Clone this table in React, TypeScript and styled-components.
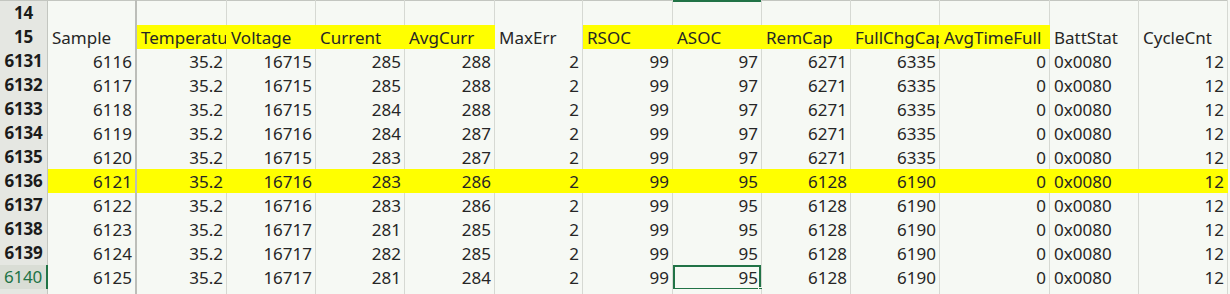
import styled, { createGlobalStyle, css } from 'styled-components'

const GREEN = '#217346'
const GRID = '#d6d9d3'
const CELL_BG = '#f6f9f4'
const HEAD_BG = '#e5e7e2'
const YELLOW = '#ffff00'

const COLS = '48px 89px 90px 89px 89px 90px 88px 90px 89px 89px 89px 110px 89px 89px'

const GlobalStyle = createGlobalStyle`
  html, body {
    margin: 0;
    padding: 0;
    background: ${CELL_BG};
    overflow: hidden;
  }
  body {
    font-family: 'Noto Sans', 'Liberation Sans', sans-serif;
  }
`

const Sheet = styled.div`
  width: 1230px;
  height: 294px;
  overflow: hidden;
  background: ${CELL_BG};
`

const Row = styled.div<{ $tall?: boolean }>`
  display: grid;
  grid-template-columns: ${COLS};
  height: ${(p) => (p.$tall ? 25 : 24)}px;
`

const RowHead = styled.div<{ $active?: boolean; $top?: boolean }>`
  box-sizing: border-box;
  background: ${(p) => (p.$active ? '#d9ddd5' : HEAD_BG)};
  border-right: 1px solid #c3c6c0;
  border-bottom: 1px solid #cfd2cc;
  color: #1b1b1b;
  font-size: 17px;
  font-weight: 700;
  line-height: 24px;
  text-align: center;
  letter-spacing: -0.2px;
  ${(p) =>
    p.$top &&
    css`
      box-shadow: inset 0 1px 0 #c3c6c0;
      line-height: 26px;
    `}
  ${(p) =>
    p.$active &&
    css`
      color: ${GREEN};
      font-weight: 400;
      border-right: 2px solid ${GREEN};
    `}
`

interface CellProps {
  $align?: 'left' | 'right'
  $fill?: boolean
  $frozen?: boolean
  $selected?: boolean
  $top?: 'plain' | 'active'
}

const Cell = styled.div<CellProps>`
  position: relative;
  box-sizing: border-box;
  overflow: hidden;
  white-space: nowrap;
  padding: 0 3px 0 4px;
  background: ${(p) => (p.$fill ? YELLOW : CELL_BG)};
  border-right: 1px solid ${(p) => (p.$fill ? YELLOW : GRID)};
  border-bottom: 1px solid ${GRID};
  color: #262626;
  font-size: 17px;
  line-height: 25px;
  text-align: ${(p) => p.$align ?? 'right'};
  ${(p) =>
    p.$frozen &&
    css`
      border-right: 2px solid #bcbeb9;
    `}
  ${(p) =>
    p.$top &&
    css`
      box-shadow: inset 0 ${p.$top === 'active' ? 2 : 1}px 0 ${p.$top === 'active' ? GREEN : '#c3c6c0'};
    `}
  ${(p) =>
    p.$selected &&
    css`
      overflow: visible;
      box-shadow: inset 0 0 0 2px ${GREEN};
      &::after {
        content: '';
        position: absolute;
        right: -4px;
        bottom: -4px;
        width: 5px;
        height: 5px;
        background: ${GREEN};
        border: 1px solid ${CELL_BG};
      }
    `}
`

const headers = [
  'Sample',
  'Temperature',
  'Voltage',
  'Current',
  'AvgCurr',
  'MaxErr',
  'RSOC',
  'ASOC',
  'RemCap',
  'FullChgCap',
  'AvgTimeFull',
  'BattStat',
  'CycleCnt',
]
const yellowHeads = [1, 2, 3, 4, 6, 7, 8, 9, 10]
const SELECTED_COL = 7

const rows: { n: number; v: (string | number)[] }[] = [
  { n: 6131, v: [6116, 35.2, 16715, 285, 288, 2, 99, 97, 6271, 6335, 0, '0x0080', 12] },
  { n: 6132, v: [6117, 35.2, 16715, 285, 288, 2, 99, 97, 6271, 6335, 0, '0x0080', 12] },
  { n: 6133, v: [6118, 35.2, 16715, 284, 288, 2, 99, 97, 6271, 6335, 0, '0x0080', 12] },
  { n: 6134, v: [6119, 35.2, 16716, 284, 287, 2, 99, 97, 6271, 6335, 0, '0x0080', 12] },
  { n: 6135, v: [6120, 35.2, 16715, 283, 287, 2, 99, 97, 6271, 6335, 0, '0x0080', 12] },
  { n: 6136, v: [6121, 35.2, 16716, 283, 286, 2, 99, 95, 6128, 6190, 0, '0x0080', 12] },
  { n: 6137, v: [6122, 35.2, 16716, 283, 286, 2, 99, 95, 6128, 6190, 0, '0x0080', 12] },
  { n: 6138, v: [6123, 35.2, 16717, 281, 285, 2, 99, 95, 6128, 6190, 0, '0x0080', 12] },
  { n: 6139, v: [6124, 35.2, 16717, 282, 285, 2, 99, 95, 6128, 6190, 0, '0x0080', 12] },
  { n: 6140, v: [6125, 35.2, 16717, 281, 284, 2, 99, 95, 6128, 6190, 0, '0x0080', 12] },
]
const HIGHLIGHT_ROW = 6136
const ACTIVE_ROW = 6140

export default function App() {
  return (
    <>
      <GlobalStyle />
      <Sheet>
        <Row $tall>
          <RowHead $top>14</RowHead>
          {headers.map((_, i) => (
            <Cell key={i} $frozen={i === 0} $top={i === SELECTED_COL ? 'active' : 'plain'} />
          ))}
        </Row>
        <Row>
          <RowHead>15</RowHead>
          {headers.map((h, i) => (
            <Cell key={h} $align='left' $frozen={i === 0} $fill={yellowHeads.includes(i)}>
              {h}
            </Cell>
          ))}
        </Row>
        {rows.map((r) => (
          <Row key={r.n}>
            <RowHead $active={r.n === ACTIVE_ROW}>{r.n}</RowHead>
            {r.v.map((v, i) => (
              <Cell
                key={i}
                $align={typeof v === 'string' ? 'left' : 'right'}
                $frozen={i === 0}
                $fill={r.n === HIGHLIGHT_ROW}
                $selected={r.n === ACTIVE_ROW && i === SELECTED_COL}
              >
                {v}
              </Cell>
            ))}
          </Row>
        ))}
        <Row>
          <RowHead />
          {headers.map((_, i) => (
            <Cell key={i} $frozen={i === 0} />
          ))}
        </Row>
      </Sheet>
    </>
  )
}
